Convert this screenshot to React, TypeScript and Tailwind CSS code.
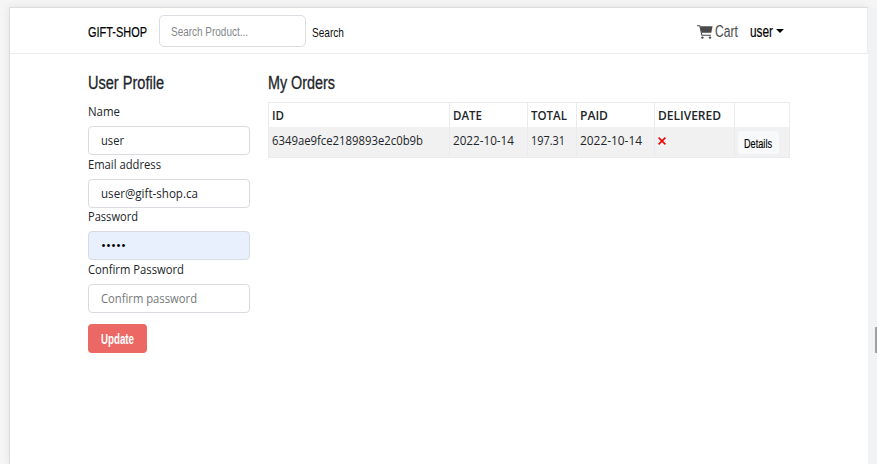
import { useLayoutEffect, useRef } from "react";

type FitProps = { text: string; width: number; className?: string };

/* A line of text condensed or widened to an exact advance width. */
function Fit({ text, width, className = "" }: FitProps) {
  const ref = useRef<HTMLSpanElement>(null);
  useLayoutEffect(() => {
    const el = ref.current;
    if (!el) return;
    el.style.transform = "none";
    const natural = el.getBoundingClientRect().width;
    el.style.transform = `scaleX(${width / natural})`;
  }, [width, text]);
  return (
    <span className={`block shrink-0 whitespace-nowrap text-left ${className}`} style={{ width }}>
      <span ref={ref} className="inline-block origin-left">{text}</span>
    </span>
  );
}

const narrow = "font-['Liberation_Sans',sans-serif]";

const fields = [
  { label: "Name", labelWidth: 32, value: "user", valueWidth: 23, box: "bg-white", ink: "text-[#212529]" },
  { label: "Email address", labelWidth: 73, value: "user@gift-shop.ca", valueWidth: 97, box: "bg-white", ink: "text-[#212529]" },
  { label: "Password", labelWidth: 50, value: "•••••", valueWidth: 25, box: "bg-[#e8f0fe]", ink: "text-black" },
  { label: "Confirm Password", labelWidth: 96, value: "Confirm password", valueWidth: 96, box: "bg-white", ink: "text-[#747779]" },
];

const columns = [
  { head: "ID", headWidth: 12, value: "6349ae9fce2189893e2c0b9b", valueWidth: 151 },
  { head: "DATE", headWidth: 29, value: "2022-10-14", valueWidth: 61 },
  { head: "TOTAL", headWidth: 36, value: "197.31", valueWidth: 34 },
  { head: "PAID", headWidth: 28, value: "2022-10-14", valueWidth: 62 },
  { head: "DELIVERED", headWidth: 63, value: "", valueWidth: 0 },
];

const grid = "grid grid-cols-[181px_78px_49px_78px_80px_55px]";
const cell = "border-r border-[#e9ebee] pl-[3px]";

export default function App() {
  return (
    <div className="flex h-[464px] w-[877px] overflow-hidden bg-[#f5f5f5] pl-[9px] font-['Open_Sans','Noto_Sans',sans-serif] text-[12px] text-[#212529]">
      <div className="mt-[7px] w-[859px] shrink-0 border-l border-t border-[#dcdcdc] bg-white shadow-[0_0_8px_rgba(0,0,0,0.08)]">
        <nav className="flex h-[46px] items-center border-b border-r border-[#ececec] pl-[78px]">
          <Fit text="GIFT-SHOP" width={59} className={`pt-[3px] text-[15px] leading-5 text-black [-webkit-text-stroke:0.2px_black] ${narrow}`} />
          <div className="ml-3 flex h-8 w-[147px] items-center rounded-[5px] border border-[#dadde1] pl-[11px]">
            <Fit text="Search Product..." width={77} className={`pt-[3px] text-[13px] text-[#85888b] ${narrow}`} />
          </div>
          <Fit text="Search" width={32} className={`ml-[6px] pt-[4px] text-[13px] text-[#111] ${narrow}`} />
          <svg className="ml-[353px] mt-[2px] h-[14px] w-4 shrink-0" viewBox="0 0 16 14" fill="#4b4b4b">
            <path d="M3.1 1.2H15.6L14.3 7.8H4.6z" />
            <path d="M0 .7H2.8L4.9 10.2H14" fill="none" stroke="#4b4b4b" strokeWidth="1.1" />
            <circle cx="5.4" cy="12.6" r="1.2" />
            <circle cx="13" cy="12.6" r="1.2" />
          </svg>
          <Fit text="Cart" width={23} className={`ml-[2px] pt-[3px] text-[16px] text-[#4b4b4b] ${narrow}`} />
          <Fit text="user" width={23} className={`ml-3 pt-[3px] text-[16px] text-black [-webkit-text-stroke:0.2px_black] ${narrow}`} />
          <span className="ml-[3px] border-x-4 border-t-4 border-x-transparent border-t-black" />
        </nav>

        <main className="flex pl-[78px] pt-[18px]">
          <section className="w-[162px]">
            <h2><Fit text="User Profile" width={76} className={`h-[22px] text-[18px] leading-[22px] [-webkit-text-stroke:0.3px_#212529] ${narrow}`} /></h2>
            <div className="mt-[9px]">
              {fields.map((field) => (
                <div key={field.label} className="h-[52.6px]">
                  <Fit text={field.label} width={field.labelWidth} className="h-[18px] leading-[18px]" />
                  <div className={`mt-[5px] flex h-[29px] items-center rounded-[4px] border border-[#d8dbdf] pl-3 ${field.box}`}>
                    <Fit text={field.value} width={field.valueWidth} className={`pt-px leading-[18px] ${field.ink}`} />
                  </div>
                </div>
              ))}
            </div>
            <button className="mt-[11px] flex h-[29px] w-[59px] items-center rounded-[4px] bg-[#eb6864] pl-[13px] pt-[2px] text-white">
              <Fit text="Update" width={33} className={`text-[14px] font-bold ${narrow}`} />
            </button>
          </section>

          <section className="ml-[18px] w-[522px]">
            <h2><Fit text="My Orders" width={67} className={`h-[22px] text-[18px] leading-[22px] [-webkit-text-stroke:0.3px_#212529] ${narrow}`} /></h2>
            <div className="mt-[8px] border-b border-l border-t border-[#e9ebee]">
              <div className={`${grid} h-[24px]`}>
                {columns.map((column) => (
                  <div key={column.head} className={`${cell} pt-[4px]`}>
                    <Fit text={column.head} width={column.headWidth} className="font-semibold leading-[18px]" />
                  </div>
                ))}
                <div className={cell} />
              </div>
              <div className={`${grid} h-[30px] bg-[#f1f1f1]`}>
                {columns.map((column) => (
                  <div key={column.head} className={`${cell} pt-[5px]`}>
                    {column.value ? (
                      <Fit text={column.value} width={column.valueWidth} className="leading-[18px]" />
                    ) : (
                      <svg className="mt-[5px] h-2 w-2" viewBox="0 0 8 8" stroke="#f00000" strokeWidth="1.5">
                        <path d="M.6.6l6.8 6.8M7.4.6L.6 7.4" />
                      </svg>
                    )}
                  </div>
                ))}
                <div className={`${cell} pt-[4px]`}>
                  <button className="flex h-[23px] w-[41px] items-center rounded-[3px] bg-[#f8f9fa] pl-[6px] pt-[3px]">
                    <Fit text="Details" width={28} className={`text-[12px] text-black [-webkit-text-stroke:0.15px_black] ${narrow}`} />
                  </button>
                </div>
              </div>
            </div>
          </section>
        </main>
      </div>
      <div className="mt-[8px] w-[9px] shrink-0 bg-[#f1f2f4] pl-[7px] pt-[319px]">
        <div className="h-[26px] w-[2px] bg-[#a0a0a0]" />
      </div>
    </div>
  );
}
